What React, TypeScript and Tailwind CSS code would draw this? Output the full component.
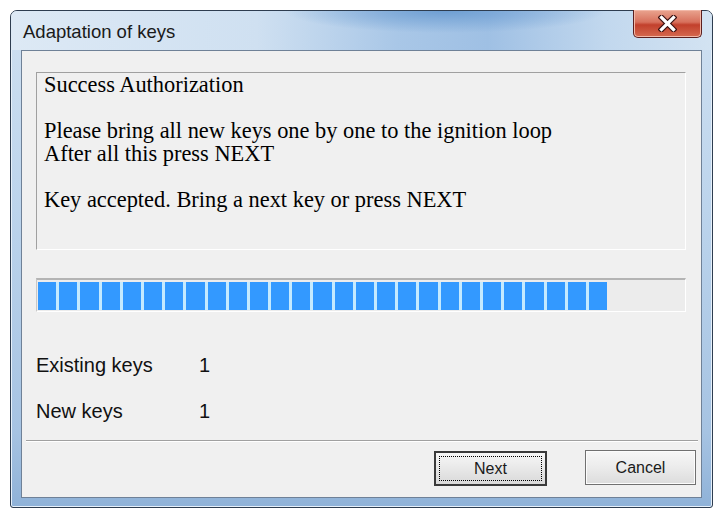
import React from "react";

const BLOCKS = 27;

const CloseGlyph = () => (
  <svg width="19" height="17" viewBox="0 0 19 17">
    <path
      d="M3.5 2.5 L15.5 14.5 M15.5 2.5 L3.5 14.5"
      stroke="#3a1010"
      strokeWidth="5.5"
      strokeLinecap="square"
    />
    <path
      d="M3.5 2.5 L15.5 14.5 M15.5 2.5 L3.5 14.5"
      stroke="#ffffff"
      strokeWidth="3.2"
      strokeLinecap="square"
    />
  </svg>
);

const App = () => {
  return (
    <div className="w-[725px] h-[516px] bg-white pt-[10px] pl-[10px]">
      {/* Window frame */}
      <div className="flex flex-col w-[703px] h-[498px] px-[10px] pb-[9px] border border-[#2e3d50] rounded-t-[7px] rounded-b-[3px] bg-[linear-gradient(180deg,#cfe0f1_0%,#bcd4ec_40%,#a6c3e2_85%,#8fb2d8_100%)] shadow-[inset_0_0_0_1px_#e6f0fa]">
        {/* Title bar */}
        <div className="flex justify-between -mx-[10px] px-[10px] h-[39px] rounded-t-[6px] bg-[radial-gradient(ellipse_160px_22px_at_62%_0%,#6f9fd3_0%,rgba(111,159,211,0)_100%),linear-gradient(90deg,#dde9f5_0%,#cfe0f1_35%,#a9c7e7_55%,#9fc0e4_68%,#c2d8ee_85%,#d3e3f2_100%)]">
          <span className="pl-[2px] pt-[10px] text-[18.5px] leading-[22px] text-[#1a1a1a] font-['Liberation_Sans',Arial,sans-serif]">
            Adaptation of keys
          </span>
          <button className="flex items-center justify-center -mt-[1px] w-[69px] h-[28px] rounded-b-[5px] border border-[#5b1f1f] border-t-0 bg-[linear-gradient(180deg,#e9a48f_0%,#d7705c_45%,#c2402c_55%,#d5694f_100%)] shadow-[inset_0_0_0_1px_#f2b8a8]">
            <CloseGlyph />
          </button>
        </div>

        {/* Client area */}
        <div className="flex flex-col flex-1 pl-[14px] pr-[15px] border border-[#6f8197] bg-[#f0f0f0]">
          {/* Message box */}
          <div className="mt-[21px] h-[178px] pl-[7px] border border-t-[#a0a0a0] border-l-[#a0a0a0] border-r-white border-b-white text-[22.4px] leading-[23px] text-black font-['Liberation_Serif','Times_New_Roman',serif]">
            <p>Success Authorization</p>
            <p>&nbsp;</p>
            <p>Please bring all new keys one by one to the ignition loop</p>
            <p>After all this press NEXT</p>
            <p>&nbsp;</p>
            <p>Key accepted. Bring a next key or press NEXT</p>
          </div>

          {/* Progress bar */}
          <div className="flex items-center mt-[28px] h-[34px] px-[1px] border-t-2 border-l border-t-[#b4b4b4] border-l-[#c8c8c8] border-r border-b border-r-white border-b-white bg-[#ececec]">
            <div className="flex gap-[3px] h-[28px] bg-[#c4eaff]">
              {Array.from({ length: BLOCKS }).map((_, i) => (
                <div key={i} className="w-[18.2px] h-full bg-[#3399ff]" />
              ))}
            </div>
          </div>

          {/* Key counters */}
          <div className="grid grid-cols-[163px_auto] gap-y-[22px] mt-[41px] text-[20px] leading-[24px] text-[#111] font-['Liberation_Sans',Arial,sans-serif]">
            <span>Existing keys</span>
            <span>1</span>
            <span>New keys</span>
            <span>1</span>
          </div>

          {/* Separator */}
          <div className="mt-[17px] -ml-[10px] -mr-[12px] h-[2px] border-t border-t-[#a0a0a0] border-b border-b-white" />

          {/* Buttons */}
          <div className="flex justify-end gap-[38px] mt-[9px] -mr-[10px] text-[16px] text-[#1a1a1a] font-['Liberation_Sans',Arial,sans-serif]">
            <button className="flex items-center justify-center w-[113px] h-[35px] border-2 border-[#3a3a3a] bg-[linear-gradient(180deg,#f7f7f7_0%,#e8e8e8_50%,#d9d9d9_100%)]">
              <span className="flex items-center justify-center w-[103px] h-[25px] border border-dotted border-black">
                Next
              </span>
            </button>
            <button className="flex items-center justify-center w-[111px] h-[35px] -mt-[1px] border border-[#707070] bg-[linear-gradient(180deg,#f7f7f7_0%,#ebebeb_50%,#dcdcdc_100%)] shadow-[inset_0_0_0_1px_#fcfcfc]">
              Cancel
            </button>
          </div>
        </div>
      </div>
    </div>
  );
};

export default App;
